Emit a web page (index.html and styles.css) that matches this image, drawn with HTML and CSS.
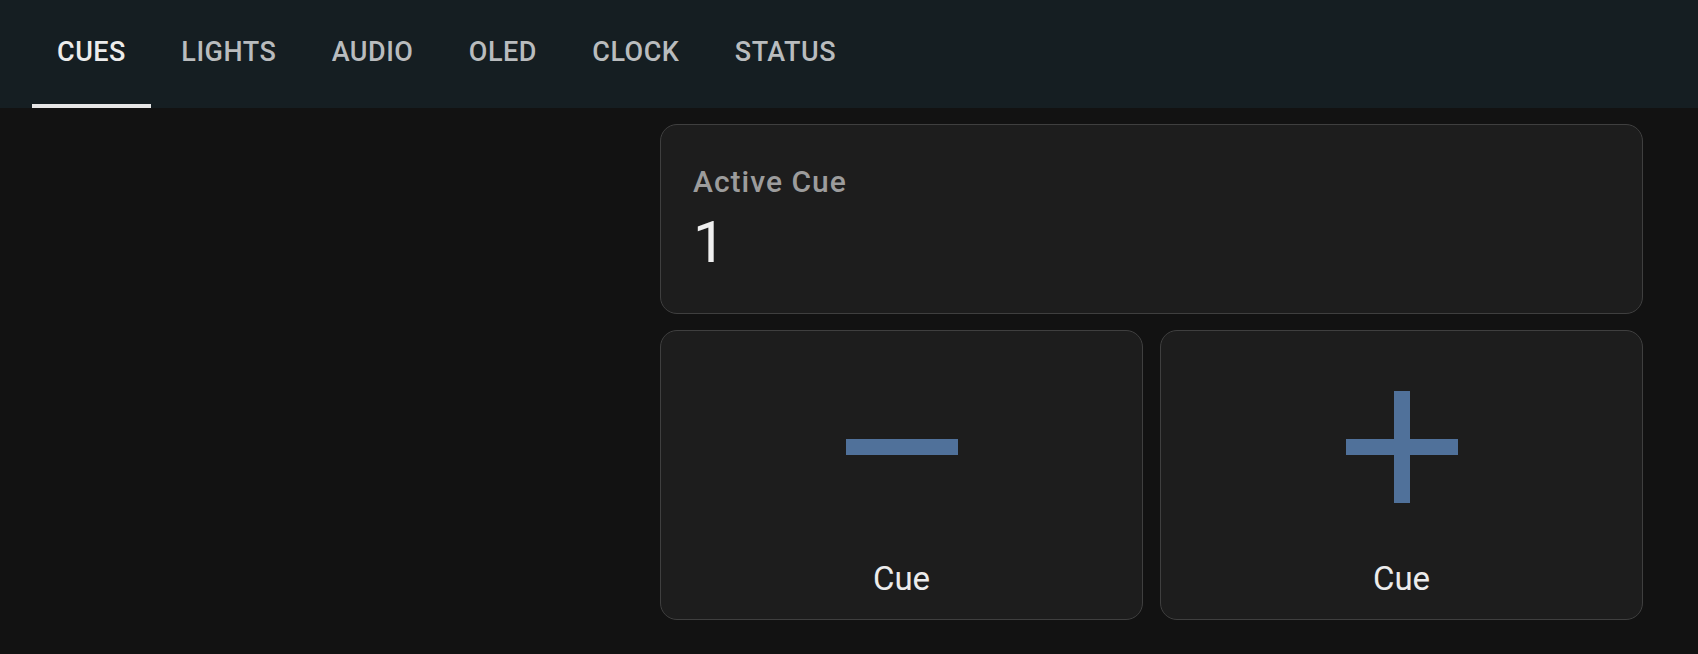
FILE: index.html
```html
<!DOCTYPE html>
<html lang="en">
<head>
<meta charset="utf-8">
<title>Cues</title>
<link rel="stylesheet" href="styles.css">
</head>
<body>
<header class="appbar">
  <nav class="tabs">
    <div class="tab active">CUES</div>
    <div class="tab">LIGHTS</div>
    <div class="tab">AUDIO</div>
    <div class="tab">OLED</div>
    <div class="tab">CLOCK</div>
    <div class="tab">STATUS</div>
  </nav>
</header>
<main class="main">
  <section class="panel">
    <div class="card status-card">
      <div class="label">Active Cue</div>
      <div class="value">1</div>
    </div>
    <div class="buttons">
      <div class="card btn-card">
        <svg class="icon" viewBox="0 0 24 24"><path d="M19 13H5v-2h14v2z"/></svg>
        <div class="btn-text">Cue</div>
      </div>
      <div class="card btn-card">
        <svg class="icon" viewBox="0 0 24 24"><path d="M19 13h-6v6h-2v-6H5v-2h6V5h2v6h6v2z"/></svg>
        <div class="btn-text">Cue</div>
      </div>
    </div>
  </section>
</main>
</body>
</html>
```
FILE: styles.css
```css
* { box-sizing: border-box; }
html, body {
  margin: 0;
  padding: 0;
  background: #121212;
  font-family: Roboto, "Liberation Sans", sans-serif;
  color: #ececec;
}
.appbar {
  height: 108px;
  background: #151e22;
}
.tabs {
  display: flex;
  gap: 5.4px;
  height: 108px;
  padding-left: 32px;
}
.tab {
  display: flex;
  align-items: center;
  padding: 0 25px;
  font-size: 27px;
  font-weight: 500;
  letter-spacing: 0.5px;
  color: #b9bcbe;
  border-bottom: 4px solid transparent;
}
.tab.active {
  color: #ececec;
  border-bottom-color: #e6e6e6;
}
.main {
  display: flex;
  justify-content: flex-end;
  padding: 16px 55px 0 0;
}
.panel {
  width: 983px;
  display: flex;
  flex-direction: column;
  gap: 16px;
}
.card {
  background: #1d1d1d;
  border: 1px solid #3f3f3f;
  border-radius: 17px;
}
.status-card {
  padding: 32px 32px 36px;
}
.label {
  font-size: 30px;
  font-weight: 500;
  line-height: 50px;
  letter-spacing: 1px;
  color: #9c9c9c;
}
.value {
  font-size: 58px;
  font-weight: 400;
  line-height: 70px;
  color: #efefef;
}
.buttons {
  display: grid;
  grid-template-columns: 1fr 1fr;
  gap: 17px;
}
.btn-card {
  display: flex;
  flex-direction: column;
  align-items: center;
  padding: 20px 0 20px;
}
.icon {
  width: 192px;
  height: 192px;
  fill: #50719a;
  display: block;
}
.btn-text {
  margin-top: 16px;
  font-size: 33px;
  line-height: 40px;
  color: #ececec;
}
```
